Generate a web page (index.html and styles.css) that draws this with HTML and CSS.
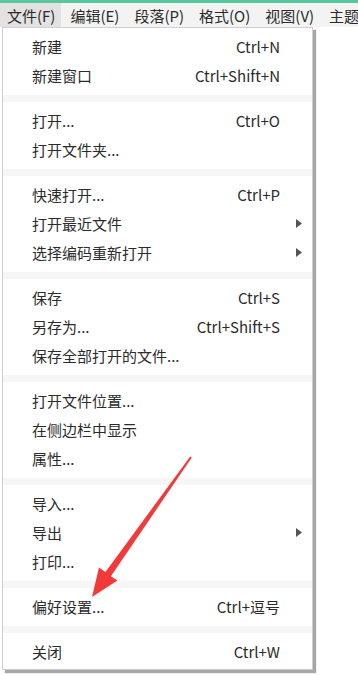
FILE: index.html
```html
<!DOCTYPE html>
<html lang="zh-CN">
<head>
<meta charset="utf-8">
<title>文件菜单</title>
<link rel="stylesheet" href="styles.css">
</head>
<body>
<div class="topline"></div>
<div class="menubar">
  <div class="mb-item active">文件(F)</div>
  <div class="mb-item">编辑(E)</div>
  <div class="mb-item">段落(P)</div>
  <div class="mb-item">格式(O)</div>
  <div class="mb-item">视图(V)</div>
  <div class="mb-item">主题</div>
</div>
<div class="dropdown">
  <div class="item"><span class="label">新建</span><span class="key">Ctrl+N</span><span class="sub"></span></div>
  <div class="item"><span class="label">新建窗口</span><span class="key">Ctrl+Shift+N</span><span class="sub"></span></div>
  <div class="sep"></div>
  <div class="item"><span class="label">打开...</span><span class="key">Ctrl+O</span><span class="sub"></span></div>
  <div class="item"><span class="label">打开文件夹...</span><span class="key"></span><span class="sub"></span></div>
  <div class="sep"></div>
  <div class="item"><span class="label">快速打开...</span><span class="key">Ctrl+P</span><span class="sub"></span></div>
  <div class="item"><span class="label">打开最近文件</span><span class="key"></span><span class="sub"><svg width="6" height="9" viewBox="0 0 6 9"><path d="M0 0L6 4.5L0 9Z" fill="#555"/></svg></span></div>
  <div class="item"><span class="label">选择编码重新打开</span><span class="key"></span><span class="sub"><svg width="6" height="9" viewBox="0 0 6 9"><path d="M0 0L6 4.5L0 9Z" fill="#555"/></svg></span></div>
  <div class="sep"></div>
  <div class="item"><span class="label">保存</span><span class="key">Ctrl+S</span><span class="sub"></span></div>
  <div class="item"><span class="label">另存为...</span><span class="key">Ctrl+Shift+S</span><span class="sub"></span></div>
  <div class="item"><span class="label">保存全部打开的文件...</span><span class="key"></span><span class="sub"></span></div>
  <div class="sep"></div>
  <div class="item"><span class="label">打开文件位置...</span><span class="key"></span><span class="sub"></span></div>
  <div class="item"><span class="label">在侧边栏中显示</span><span class="key"></span><span class="sub"></span></div>
  <div class="item"><span class="label">属性...</span><span class="key"></span><span class="sub"></span></div>
  <div class="sep"></div>
  <div class="item"><span class="label">导入...</span><span class="key"></span><span class="sub"></span></div>
  <div class="item"><span class="label">导出</span><span class="key"></span><span class="sub"><svg width="6" height="9" viewBox="0 0 6 9"><path d="M0 0L6 4.5L0 9Z" fill="#555"/></svg></span></div>
  <div class="item"><span class="label">打印...</span><span class="key"></span><span class="sub"></span></div>
  <div class="sep"></div>
  <div class="item"><span class="label">偏好设置...</span><span class="key">Ctrl+逗号</span><span class="sub"></span></div>
  <div class="sep"></div>
  <div class="item"><span class="label">关闭</span><span class="key">Ctrl+W</span><span class="sub"></span></div>
</div>
<svg class="annot" width="358" height="675" viewBox="0 0 358 675">
  <polygon points="191.8,457.5 110.9,576.3 117.4,580.6 92,597 99,567.6 105.5,571.9 190.2,456.5" fill="#f23a3a"/>
</svg>
</body>
</html>
```
FILE: styles.css
```css
html, body {
  margin: 0;
  padding: 0;
  background: #ffffff;
}
body {
  width: 358px;
  height: 675px;
  overflow: hidden;
  position: relative;
  font-family: "Noto Sans CJK SC", "Noto Sans", sans-serif;
  color: #2b2b2b;
  font-size: 15px;
}
.topline {
  height: 3px;
  background: #58c79e;
}
.menubar {
  display: flex;
  gap: 2px;
  height: 24px;
  background: #f3f3f3;
  white-space: nowrap;
  overflow: hidden;
}
.mb-item {
  flex: none;
  height: 24px;
  box-sizing: border-box;
  padding: 2px 6px 0 7px;
  line-height: 22px;
  color: #2b2b2b;
}
.mb-item.active {
  background: #e3e1e2;
}
.dropdown {
  margin-left: 2px;
  width: 309px;
  border: 1px solid #cfcfcf;
  box-shadow: 3px 3px 1px rgba(0, 0, 0, 0.35);
  padding: 4px 0 3px;
  background: #ffffff;
}
.item {
  display: flex;
  align-items: center;
  height: 29px;
  padding-left: 29px;
  padding-right: 10px;
  white-space: nowrap;
}
.label {
  flex: 1;
}
.key {
  flex: none;
}
.sub {
  flex: none;
  width: 22px;
  display: flex;
  justify-content: flex-end;
  align-items: center;
}
.sub svg {
  display: block;
}
.sep {
  height: 16px;
  display: flex;
  align-items: center;
}
.sep::before {
  content: "";
  display: block;
  width: 100%;
  height: 7px;
  background: #f6f6f6;
}
.annot {
  position: absolute;
  left: 0;
  top: 0;
  pointer-events: none;
}
```
